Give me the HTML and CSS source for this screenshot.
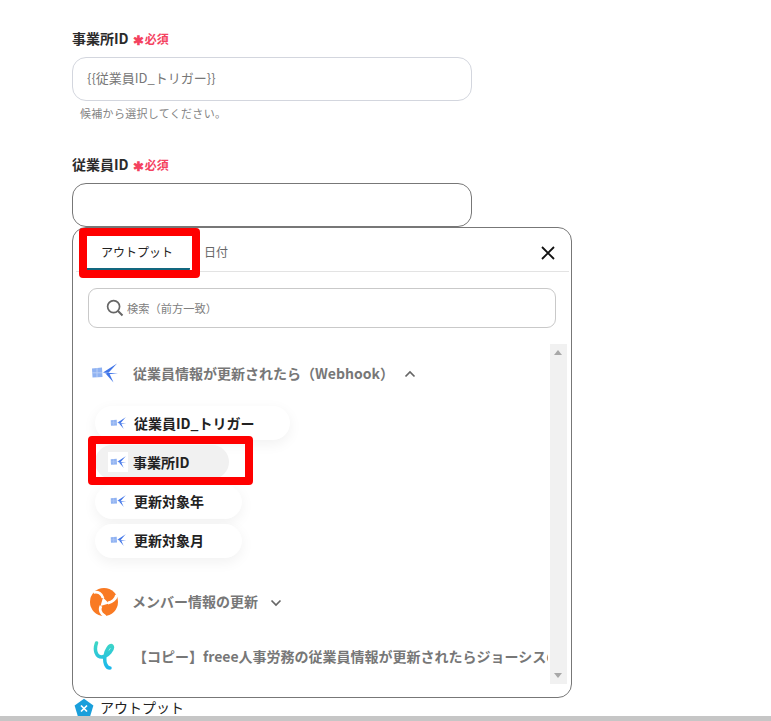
FILE: index.html
```html
<!DOCTYPE html>
<html lang="ja">
<head>
<meta charset="utf-8">
<title>設定</title>
<link rel="stylesheet" href="styles.css">
</head>
<body>
<main class="page">
  <section class="field first">
    <div class="label">事業所ID<span class="req"><span class="star">✱</span>必須</span></div>
    <div class="input filled">{{従業員ID_トリガー}}</div>
    <p class="hint">候補から選択してください。</p>
  </section>
  <section class="field second">
    <div class="label">従業員ID<span class="req"><span class="star">✱</span>必須</span></div>
    <div class="input active"></div>
  </section>
  <section class="panel">
    <div class="tabs">
      <div class="tab on">アウトプット</div>
      <div class="tab">日付</div>
      <svg class="close" viewBox="0 0 16 16" width="16" height="16"><path d="M2 2L14 14M14 2L2 14" stroke="#111" stroke-width="1.8" fill="none"/></svg>
    </div>
    <div class="search">
      <svg viewBox="0 0 18 18" width="18" height="18"><circle cx="7.6" cy="7.6" r="6" stroke="#666" stroke-width="1.7" fill="none"/><path d="M12 12L16.5 16.5" stroke="#666" stroke-width="1.9"/></svg>
      <span>検索（前方一致）</span>
    </div>
    <div class="list">
      <div class="group g1">
        <svg class="icon-big" viewBox="0 0 28 20" width="28" height="20"><use href="#sr"/></svg>
        <span class="gtitle">従業員情報が更新されたら（Webhook）</span>
        <svg class="chev" viewBox="0 0 12 8" width="12" height="8"><path d="M1.5 6.5L6 2L10.5 6.5" stroke="#666" stroke-width="1.7" fill="none"/></svg>
      </div>
      <div class="chips">
        <div class="chip first-chip"><svg viewBox="0 0 28 20" width="17" height="12"><use href="#sr"/></svg>従業員ID_トリガー</div>
        <div class="chip sel"><span class="chip-ico"><svg viewBox="0 0 28 20" width="17" height="12"><use href="#sr"/></svg></span>事業所ID</div>
        <div class="chip"><svg viewBox="0 0 28 20" width="17" height="12"><use href="#sr"/></svg>更新対象年</div>
        <div class="chip"><svg viewBox="0 0 28 20" width="17" height="12"><use href="#sr"/></svg>更新対象月</div>
      </div>
      <div class="group g2">
        <svg class="logo" viewBox="0 0 30 30" width="30" height="30">
          <circle cx="15" cy="15" r="14" fill="#f97a23"/>
          <path d="M14 11C13 7 9 4 4.500 5.500M19 16C23 15.500 27 12 27.500 8M12 19C10 23 12 27 16.500 29.500" stroke="#fff" stroke-width="2.800" fill="none"/>
          <path d="M14 10.500L20 16.500L11.500 19Z" fill="#fff"/>
        </svg>
        <span class="gtitle">メンバー情報の更新</span>
        <svg class="chev" viewBox="0 0 12 8" width="12" height="8"><path d="M1.500 1.500L6 6L10.500 1.500" stroke="#666" stroke-width="1.700" fill="none"/></svg>
      </div>
      <div class="group g3">
        <svg class="logo2" viewBox="0 0 24 30" width="24" height="30">
          <defs><linearGradient id="jo" x1="0" y1="0" x2="0" y2="1"><stop offset="0" stop-color="#3ed6c5"/><stop offset="1" stop-color="#1bb8ec"/></linearGradient></defs>
          <path d="M3.500 2C1 9 3 16 9 16C15 15 21 8 19 5C17 3 13 9 12 15C11 21 13 27 17 27" stroke="url(#jo)" stroke-width="3.500" fill="none" stroke-linecap="round"/>
        </svg>
        <span class="gtitle clip">【コピー】freee人事労務の従業員情報が更新されたらジョーシスの情報を更新する</span>
      </div>
      <div class="scrollbar"><i class="up"></i><i class="down"></i></div>
    </div>
    <div class="mark mark-tab"></div>
    <div class="mark mark-item"></div>
  </section>
  <div class="output">
    <svg viewBox="0 0 20 20" width="20" height="20"><path d="M10 .8L19.400 7.500L16 18.800H4L.6 7.500Z" fill="#1a9fdb"/><path d="M7 7.500L13 13.500M13 7.500L7 13.500" stroke="#fff" stroke-width="1.700"/></svg>
    <span class="output-text">アウトプット</span>
  </div>
</main>
<div class="bottom"></div>
<svg class="defs" width="0" height="0">
  <symbol id="sr" viewBox="0 0 28 20">
    <path d="M1 5.500L11 4.500L11.500 14L1.500 14.500Z" fill="#8fb2f2"/>
    <path d="M6 5V14M1 9.800H11" stroke="#b9cff7" stroke-width="1"/>
    <path d="M26 .5L12 9.500L17.500 9.800Z" fill="#3f74e8"/>
    <path d="M12 9.500L27 10.500L17 11.200Z" fill="#3f74e8"/>
    <path d="M15 11L22.500 19.500L18.500 10.800Z" fill="#3f74e8"/>
  </symbol>
</svg>
</body>
</html>
```

FILE: styles.css
```css
* { box-sizing: border-box; }
html, body { margin: 0; height: 721px; overflow: hidden; background: #fff; }
body { font-family: "Noto Sans CJK JP", "Noto Sans", sans-serif; color: #222; position: relative; }
.page { padding: 30px 0 0 72px; width: 771px; }
.field.second { margin-top: 36px; }
.label { font-size: 14px; font-weight: 700; line-height: 19px; color: #2b2b2b; height: 19px; padding-bottom: 2px; display: flex; align-items: center; }
.req { color: #f4425f; font-size: 12px; font-weight: 700; margin-left: 4px; display: inline-flex; align-items: center; }
.star { font-size: 13px; line-height: 12px; width: 12px; padding-top: 3px; }
.input { width: 400px; height: 44px; border-radius: 14px; margin-top: 8px; background: #fff; font-size: 13px; line-height: 40px; padding-left: 14px; color: #777; }
.input.filled { border: 1px solid #d3d6de; }
.input.active { border: 1px solid #777; }
.hint { margin: 5px 0 0 8px; font-size: 11px; letter-spacing: .3px; line-height: 14px; color: #848484; height: 14px; }
.panel { position: relative; width: 500px; height: 471px; border: 1px solid #777; border-radius: 14px; background: #fff; }
.tabs { display: flex; height: 44px; margin: 0 2px 0 3px; border-bottom: 1px solid #e3e3e3; align-items: stretch; position: relative; }
.tab { font-size: 12px; line-height: 47px; color: #666; padding: 0 9px 0 6px; }
.tab.on { color: #222; width: 106px; margin-left: 8px; padding: 0 0 0 17px; border-bottom: 3px solid #12677f; border-radius: 0 0 2px 2px; height: 43px; margin-right: 8px; }
.close { position: absolute; right: 13px; top: 17px; }
.search { margin: 16px 15px 0; height: 40px; border: 1px solid #c9c9c9; border-radius: 9px; display: flex; align-items: center; padding-left: 17px; gap: 3px; font-size: 11.250px; color: #808080; }
.list { position: relative; height: 354px; margin-top: 16px; overflow: hidden; }
.group { display: flex; align-items: center; font-size: 14px; font-weight: 700; color: #777; }
.gtitle { white-space: nowrap; }
.g1 { height: 30px; padding-left: 18px; margin-top: 14px; }
.g1 .gtitle { margin-left: 14px; }
.g1 .chev { margin-left: 10px; margin-top: 2px; }
.icon-big { flex: none; }
.chips { display: flex; flex-direction: column; align-items: flex-start; gap: 5.300px; margin: 18px 0 0 22px; }
.chip { height: 34px; border-radius: 17px; background: #fff; box-shadow: 0 4px 14px rgba(0, 0, 0, .06); display: flex; align-items: center; padding: 0 38px 1px 15px; gap: 7px; font-size: 14px; font-weight: 700; color: #222; }
.chip.first-chip { padding-right: 35px; }
.chip.sel { background: #f1f1f1; padding-right: 39px; box-shadow: none; }
.chip-ico { background: #fff; width: 20px; height: 20px; margin: 0 -2px 0 -2px; display: flex; align-items: center; justify-content: center; }
.g2 { height: 30px; margin-top: 29px; padding-left: 16px; }
.g2 .gtitle { margin-left: 13px; margin-bottom: 2px; }
.g2 .chev { margin-left: 12px; margin-top: 3px; }
.g3 { margin-top: 23px; height: 32px; padding-left: 20px; width: 475px; overflow: hidden; }
.g3 .gtitle { margin-left: 16px; }
.logo, .logo2 { flex: none; }
.scrollbar { position: absolute; right: 4px; top: 0; width: 17px; height: 340px; background: #f1f1f1; }
.up, .down { position: absolute; left: 4px; width: 0; height: 0; border-left: 4px solid transparent; border-right: 4px solid transparent; }
.up { top: 6px; border-bottom: 5px solid #a8a8a8; }
.down { bottom: 6px; border-top: 5px solid #a8a8a8; }
.mark { position: absolute; border: 8px solid #f00; border-radius: 4px; }
.mark-tab { left: 6px; top: 0; width: 121px; height: 50px; }
.mark-item { left: 15px; top: 208px; width: 165px; height: 49px; }
.output { display: flex; align-items: center; gap: 6px; height: 20px; margin: 0 0 0 2px; font-size: 14px; color: #222; }
.output-text { margin-bottom: 2px; }
.bottom { position: absolute; left: 0; right: 0; bottom: 0; height: 5px; background: #c6c6c6; }
.defs { position: absolute; }
```
